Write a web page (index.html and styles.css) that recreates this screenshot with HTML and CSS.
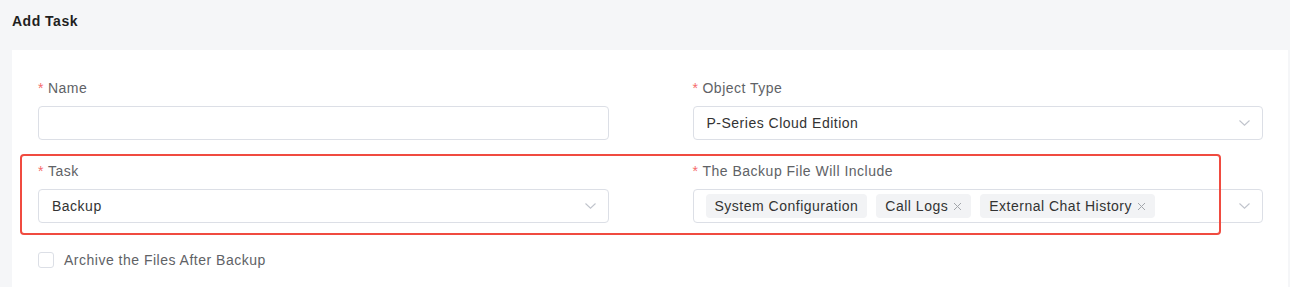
FILE: index.html
```html
<!DOCTYPE html>
<html>
<head>
<meta charset="utf-8">
<link rel="stylesheet" href="styles.css">
</head>
<body>
<div class="page">
  <div class="title">Add Task</div>
  <div class="panel">
    <div class="grid">
      <div class="field">
        <div class="label"><span class="req">*</span>Name</div>
        <div class="input"></div>
      </div>
      <div class="field">
        <div class="label"><span class="req">*</span>Object Type</div>
        <div class="input select">
          <span class="value">P-Series Cloud Edition</span>
          <svg class="chev" width="11" height="6" viewBox="0 0 11 6"><path d="M0.5 0.5 L5.5 5.2 L10.5 0.5" fill="none" stroke="#c0c4cc" stroke-width="1.1"/></svg>
        </div>
      </div>
      <div class="field">
        <div class="label"><span class="req">*</span>Task</div>
        <div class="input select">
          <span class="value">Backup</span>
          <svg class="chev" width="11" height="6" viewBox="0 0 11 6"><path d="M0.5 0.5 L5.5 5.2 L10.5 0.5" fill="none" stroke="#c0c4cc" stroke-width="1.1"/></svg>
        </div>
      </div>
      <div class="field">
        <div class="label"><span class="req">*</span>The Backup File Will Include</div>
        <div class="input select tags-input">
          <div class="tags">
            <span class="tag">System Configuration</span>
            <span class="tag">Call Logs<svg class="x" width="9" height="9" viewBox="0 0 9 9"><path d="M1 1 L8 8 M8 1 L1 8" stroke="#a3a6ab" stroke-width="1"/></svg></span>
            <span class="tag">External Chat History<svg class="x" width="9" height="9" viewBox="0 0 9 9"><path d="M1 1 L8 8 M8 1 L1 8" stroke="#a3a6ab" stroke-width="1"/></svg></span>
          </div>
          <svg class="chev" width="11" height="6" viewBox="0 0 11 6"><path d="M0.5 0.5 L5.5 5.2 L10.5 0.5" fill="none" stroke="#c0c4cc" stroke-width="1.1"/></svg>
        </div>
      </div>
    </div>
    <label class="check"><span class="box"></span><span>Archive the Files After Backup</span></label>
    <div class="highlight"></div>
  </div>
</div>
</body>
</html>
```

FILE: styles.css
```css
html, body {
  margin: 0;
  padding: 0;
  background: #f5f6f8;
  font-family: "Liberation Sans", Arial, sans-serif;
  font-size: 14px;
  letter-spacing: 0.5px;
  overflow: hidden;
}
.page {
  display: flex;
  flex-direction: column;
  padding: 0 2px 0 12px;
  height: 287px;
}
.title {
  flex: none;
  height: 50px;
  line-height: 42px;
  font-weight: bold;
  font-size: 14px;
  letter-spacing: 0.5px;
  color: #1f1f1f;
}
.panel {
  position: relative;
  flex: 1;
  background: #fff;
  padding: 28px 25px 0 26px;
}
.grid {
  display: grid;
  grid-template-columns: 1fr 1fr;
  column-gap: 84px;
  row-gap: 21px;
}
.label {
  line-height: 20px;
  height: 20px;
  margin-bottom: 8px;
  color: #606266;
}
.req {
  color: #f56c6c;
  margin-right: 4px;
}
.input {
  height: 34px;
  box-sizing: border-box;
  border: 1px solid #dcdfe6;
  border-radius: 4px;
  background: #fff;
}
.select {
  display: flex;
  align-items: center;
  justify-content: space-between;
  padding: 0 12px 0 13px;
  color: #333;
}
.tags-input {
  padding-left: 12px;
}
.tags {
  display: flex;
  gap: 9px;
}
.tag {
  display: inline-flex;
  align-items: center;
  height: 24px;
  padding: 0 9px;
  background: #f2f3f5;
  border-radius: 4px;
  color: #333;
}
.x {
  margin-left: 5px;
  flex: none;
}
.chev {
  flex: none;
}
.check {
  display: flex;
  align-items: center;
  gap: 10px;
  margin-top: 27px;
  line-height: 20px;
  color: #606266;
}
.box {
  width: 16px;
  height: 16px;
  box-sizing: border-box;
  border: 1px solid #dcdfe6;
  border-radius: 3px;
  background: #fff;
}
.highlight {
  position: absolute;
  left: 8px;
  top: 104px;
  width: 1201px;
  height: 81px;
  box-sizing: border-box;
  border: 2px solid #f04b40;
  border-radius: 4px;
  pointer-events: none;
}
```
